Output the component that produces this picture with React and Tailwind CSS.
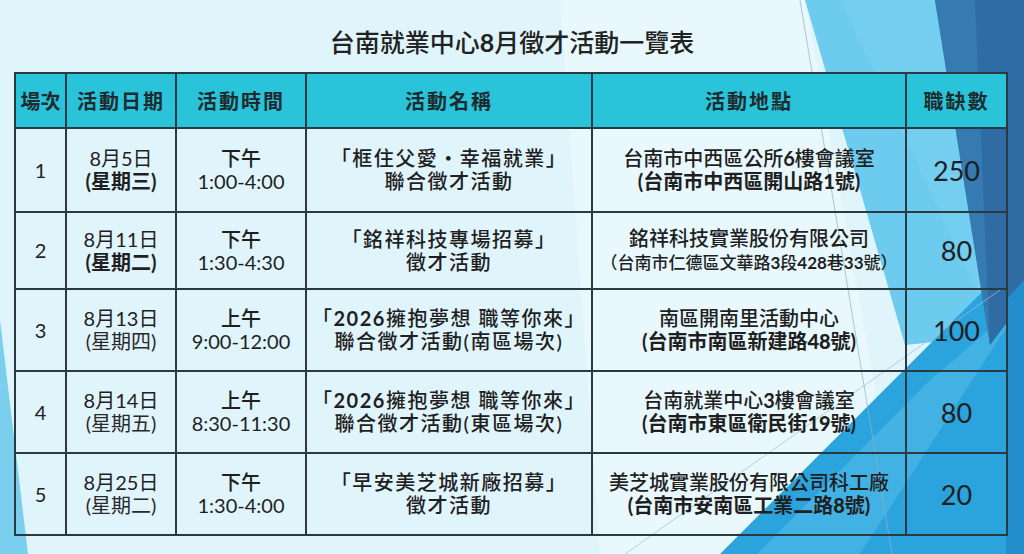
const rows = [
  {
    no: '1',
    h: 'h-[84px]',
    date: '8月5日',
    week: '(星期三)',
    weekBold: true,
    ampm: '下午',
    time: '1:00-4:00',
    name1: <>「框住父愛・幸福就業」</>,
    name2: '聯合徵才活動',
    loc1: <>台南市中西區公所<b>6</b>樓會議室</>,
    loc2: <span className="font-bold">(台南市中西區開山路<b>1</b>號)</span>,
    count: '250',
  },
  {
    no: '2',
    h: 'h-[77px]',
    date: '8月11日',
    week: '(星期二)',
    weekBold: true,
    ampm: '下午',
    time: '1:30-4:30',
    name1: <>「銘祥科技專場招募」</>,
    name2: '徵才活動',
    loc1: <>銘祥科技實業股份有限公司</>,
    loc2: (
      <span className="text-[17px] font-medium">
        （台南市仁德區文華路<b>3</b>段<b>428</b>巷<b>33</b>號）
      </span>
    ),
    count: '80',
  },
  {
    no: '3',
    h: 'h-[82px]',
    date: '8月13日',
    week: '(星期四)',
    ampm: '上午',
    time: '9:00-12:00',
    name1: <>「<b>2026</b>擁抱夢想 職等你來」</>,
    name2: '聯合徵才活動(南區場次)',
    loc1: <>南區開南里活動中心</>,
    loc2: <span className="font-bold">(台南市南區新建路<b>48</b>號)</span>,
    count: '100',
  },
  {
    no: '4',
    h: 'h-[82px]',
    date: '8月14日',
    week: '(星期五)',
    ampm: '上午',
    time: '8:30-11:30',
    name1: <>「<b>2026</b>擁抱夢想 職等你來」</>,
    name2: '聯合徵才活動(東區場次)',
    loc1: <>台南就業中心<b>3</b>樓會議室</>,
    loc2: <span className="font-bold">(台南市東區衛民街<b>19</b>號)</span>,
    count: '80',
  },
  {
    no: '5',
    h: 'h-[82px]',
    date: '8月25日',
    week: '(星期二)',
    ampm: '下午',
    time: '1:30-4:00',
    name1: <>「早安美芝城新廠招募」</>,
    name2: '徵才活動',
    loc1: <>美芝城實業股份有限公司科工廠</>,
    loc2: <span className="font-bold">(台南市安南區工業二路<b>8</b>號)</span>,
    count: '20',
  },
]

function Background() {
  return (
    <svg className="absolute inset-0" width="1024" height="554" viewBox="0 0 1024 554">
      <rect width="1024" height="554" fill="#e0f4fb" />
      <polygon points="560,0 805,0 905,554 600,554" fill="#e8f8fd" />
      <polygon points="0,320 28,554 0,554" fill="#7bcfee" />
      <polygon points="805,0 940,0 1000,335 905,345" fill="#6ccbee" />
      <polygon points="840,0 940,0 995,330" fill="#78d0f0" opacity="0.6" />
      <polygon points="720,554 1024,250 1024,554" fill="#2ba3dc" />
      <polygon points="757,554 930,380 1024,300 860,554" fill="#4db7e6" opacity="0.7" />
      <polygon points="935,0 1024,0 1024,300 990,345" fill="#2e6ca3" />
      <polygon points="935,0 975,0 990,345" fill="#3b80b8" opacity="0.7" />
      <polygon points="1006,300 1024,280 1024,554 1006,554" fill="#228ecb" />
      <line x1="800" y1="0" x2="892" y2="554" stroke="#8fb3c4" strokeWidth="1" opacity="0.7" />
      <line x1="625" y1="554" x2="1000" y2="290" stroke="#9bc3d4" strokeWidth="1" opacity="0.7" />
    </svg>
  )
}

export default function App() {
  return (
    <div className="relative w-[1024px] h-[554px] overflow-hidden font-['Lato','Noto_Sans_CJK_TC',sans-serif] text-[#1f1f1f]">
      <Background />
      <div className="relative flex flex-col">
        <h1 className="mt-[27px] h-[30px] text-center text-[25px] leading-[30px] font-medium text-[#222]">
          台南就業中心<span className="font-bold">8</span>月徵才活動一覽表
        </h1>
        <table className="mt-[15px] ml-[14px] w-[992px] table-fixed border-collapse text-center">
          <colgroup>
            <col className="w-[51px]" />
            <col className="w-[110px]" />
            <col className="w-[130px]" />
            <col className="w-[286px]" />
            <col className="w-[314px]" />
            <col className="w-[101px]" />
          </colgroup>
          <thead>
            <tr className="h-[55px] bg-[#29c4d9] text-[20px] font-bold text-[#1f2a2e]">
              <th className="border-2 border-[#2b3940] font-bold">場次</th>
              <th className="border-2 border-[#2b3940] font-bold tracking-[2px]">活動日期</th>
              <th className="border-2 border-[#2b3940] font-bold tracking-[2px]">活動時間</th>
              <th className="border-2 border-[#2b3940] font-bold tracking-[2px]">活動名稱</th>
              <th className="border-2 border-[#2b3940] font-bold tracking-[2px]">活動地點</th>
              <th className="border-2 border-[#2b3940] font-bold tracking-[2px]">職缺數</th>
            </tr>
          </thead>
          <tbody className="text-[20px] leading-[23px]">
            {rows.map((r) => (
              <tr key={r.no} className={r.h}>
                <td className="border-2 border-[#2b3940]">{r.no}</td>
                <td className="border-2 border-[#2b3940]">
                  <div>{r.date}</div>
                  <div className={r.weekBold ? 'font-bold' : 'font-normal text-[#2a2a2a]'}>{r.week}</div>
                </td>
                <td className="border-2 border-[#2b3940]">
                  <div className="font-medium">{r.ampm}</div>
                  <div>{r.time}</div>
                </td>
                <td className="border-2 border-[#2b3940] font-medium tracking-[1.5px]">
                  <div>{r.name1}</div>
                  <div>{r.name2}</div>
                </td>
                <td className="border-2 border-[#2b3940] font-medium">
                  <div>{r.loc1}</div>
                  <div>{r.loc2}</div>
                </td>
                <td className="border-2 border-[#2b3940] text-[27px]">{r.count}</td>
              </tr>
            ))}
          </tbody>
        </table>
      </div>
    </div>
  )
}
